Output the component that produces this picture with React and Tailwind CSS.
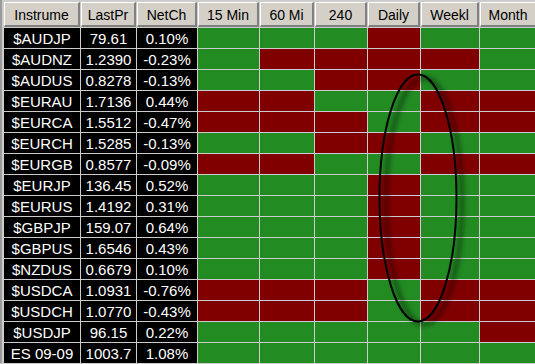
import React from "react";

const heads = ["Instrume", "LastPr", "NetCh", "15 Min", "60 Mi", "240", "Daily", "Weekl", "Month"];

// G = green, R = red for 15 Min, 60 Mi, 240, Daily, Weekl, Month
const rows = [
  ["$AUDJP", "79.61", "0.10%", "GGGRGG"],
  ["$AUDNZ", "1.2390", "-0.23%", "GRRRRG"],
  ["$AUDUS", "0.8278", "-0.13%", "GGRRGG"],
  ["$EURAU", "1.7136", "0.44%", "RRGGRR"],
  ["$EURCA", "1.5512", "-0.47%", "RRRGRR"],
  ["$EURCH", "1.5285", "-0.13%", "GGRRGG"],
  ["$EURGB", "0.8577", "-0.09%", "RRGGRR"],
  ["$EURJP", "136.45", "0.52%", "GGGRGG"],
  ["$EURUS", "1.4192", "0.31%", "GGGRGG"],
  ["$GBPJP", "159.07", "0.64%", "GGGRGG"],
  ["$GBPUS", "1.6546", "0.43%", "GGGRGG"],
  ["$NZDUS", "0.6679", "0.10%", "GGGRGG"],
  ["$USDCA", "1.0931", "-0.76%", "RRRGRR"],
  ["$USDCH", "1.0770", "-0.43%", "RRRGRR"],
  ["$USDJP", "96.15", "0.22%", "GGGGGR"],
  ["ES 09-09", "1003.7", "1.08%", "GGGGGG"],
];

export default function App() {
  return (
    <div className="relative w-[535px] h-[364px] overflow-hidden bg-[#cccccc] font-['Liberation_Sans',Arial,sans-serif]">
      <div className="grid grid-cols-[76px_55px_60px_61px_54px_52px_52px_58px_57px] grid-rows-[25px_repeat(16,20px)] gap-[1px] pl-[2px] pt-[2px] border-l-2 border-[#9a9a9a]">
        {heads.map((h) => (
          <div
            key={h}
            className="flex items-center justify-center pt-[1px] bg-[#d4d0c8] border-t border-l border-white border-b-2 border-r-2 border-b-[#808080] border-r-[#808080] text-[14px] text-black leading-none overflow-hidden whitespace-nowrap"
          >
            {h}
          </div>
        ))}
        {rows.map((r) => (
          <React.Fragment key={r[0]}>
            <div className="flex items-center justify-center bg-black text-white text-[15px] leading-none whitespace-nowrap">{r[0]}</div>
            <div className="flex items-center justify-center bg-black text-white text-[15px] leading-none">{r[1]}</div>
            <div className="flex items-center justify-center bg-black text-white text-[15px] leading-none">{r[2]}</div>
            {r[3].split("").map((c, i) => (
              <div key={i} className={c === "G" ? "bg-[#228b22]" : "bg-[#800000]"} />
            ))}
          </React.Fragment>
        ))}
      </div>

      <svg className="absolute left-0 top-0 pointer-events-none" width="535" height="364">
        <defs>
          <filter id="sh" x="-50%" y="-50%" width="200%" height="200%">
            <feGaussianBlur stdDeviation="2.5" />
          </filter>
        </defs>
        <ellipse cx="424" cy="201" rx="38" ry="123" fill="none" stroke="#000" strokeOpacity="0.45" strokeWidth="4" filter="url(#sh)" />
        <ellipse cx="418" cy="198" rx="38.5" ry="123.5" fill="none" stroke="#000" strokeWidth="2" />
      </svg>
    </div>
  );
}
